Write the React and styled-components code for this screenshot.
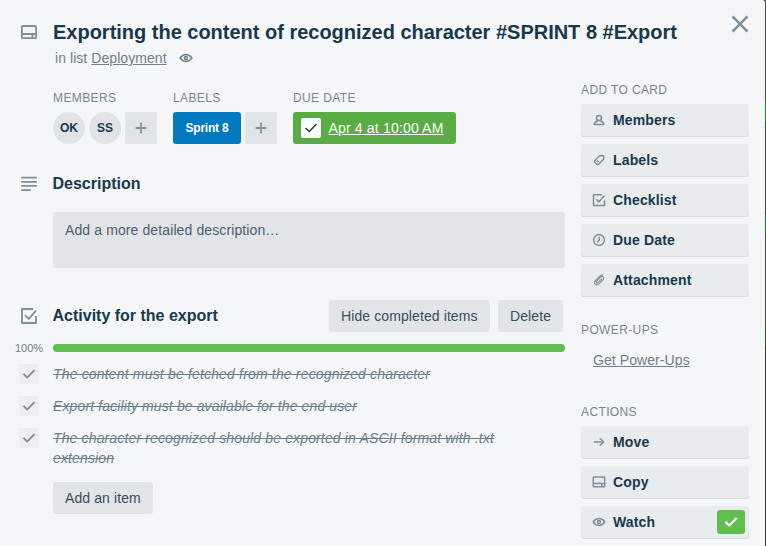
import React from "react";
import styled, { createGlobalStyle } from "styled-components";

const GlobalStyle = createGlobalStyle`
  *, *::before, *::after { box-sizing: border-box; }
  body {
    margin: 0;
    overflow: hidden;
    background: #4b4b4a;
    color: #17394d;
    font: 14px/20px "Liberation Sans", Arial, sans-serif;
  }
  h2, h3, p { margin: 0; }
  button { font: inherit; color: inherit; border: 0; padding: 0; text-align: left; }
`;

const Backdrop = styled.div`
  width: 766px;
  height: 546px;
  overflow: hidden;
  background: linear-gradient(#4b4b4a 0 100px, #168a16 100px 122px, #45423f 122px 215px, #178317 215px 235px, #4b4743 235px 330px, #176317 330px 346px, #3a3633 346px);
`;

const Dialog = styled.div`
  display: flex;
  gap: 16px;
  width: 765px;
  height: 546px;
  padding-right: 16px;
  background: #f4f6f8;
  border-radius: 0 3px 0 0;
`;

const Main = styled.main`
  width: 565px;
  padding: 18px 0 0 53px;
`;

const Sidebar = styled.aside`
  width: 168px;
  padding-top: 14px;
`;

const Row = styled.div`
  display: flex;
  align-items: center;
  height: ${(p) => p.$h}px;
  margin-top: ${(p) => p.$mt || 0}px;
`;

const Gutter = styled.span`
  display: flex;
  flex: none;
  width: 38px;
  margin-left: -38px;
  padding-left: 4.6px;
  color: #7d8f99;
`;

const Title = styled.h2`
  font-size: 20px;
  line-height: 28px;
  letter-spacing: -0.01px;
  white-space: nowrap;
`;

const SectionTitle = styled.h3`
  flex: 1;
  margin-left: -0.5px;
  font-size: 16px;
  line-height: 20px;
  white-space: nowrap;
`;

const ListLine = styled.p`
  display: flex;
  align-items: center;
  height: 20px;
  margin: 2px 0 0 2px;
  color: #6f808a;
  letter-spacing: 0.06px;
  white-space: pre;
  svg { margin-left: 10.5px; }
`;

const Link = styled.a`
  color: inherit;
  text-decoration: underline;
`;

const Details = styled.div`
  display: flex;
  margin-top: 20px;
  gap: 16px;
`;

const Heading = styled.h3`
  height: 20px;
  margin-top: ${(p) => p.$mt || 0}px;
  margin-bottom: 4px;
  color: #77868f;
  font-size: 12px;
  line-height: 20px;
  font-weight: 400;
  letter-spacing: 0.38px;
  text-transform: uppercase;
  white-space: nowrap;
`;

const Chips = styled.div`
  display: flex;
  gap: 4px;
`;

const Avatar = styled.span`
  width: 32px;
  height: 32px;
  border-radius: 50%;
  background: #e0e4e7;
  font-size: 12px;
  font-weight: 700;
  line-height: 32px;
  text-align: center;
`;

const AddBox = styled.button`
  display: flex;
  align-items: center;
  justify-content: center;
  width: 32px;
  height: 32px;
  padding-right: 1px;
  background: #e2e5e8;
  border-radius: 2px;
  color: #7d8f99;
`;

const Label = styled.span`
  width: 68px;
  height: 32px;
  background: #0079bf;
  border-radius: 3px;
  color: #fff;
  font-size: 12px;
  font-weight: 700;
  line-height: 32px;
  letter-spacing: -0.2px;
  text-align: center;
`;

const DueDate = styled.div`
  display: flex;
  align-items: center;
  gap: 7.5px;
  width: 163px;
  height: 32px;
  padding-left: 8px;
  border-radius: 3px;
  background: #5aac44;
  color: #fff;
  letter-spacing: 0.17px;
  white-space: nowrap;
`;

const CheckBox = styled.span`
  display: flex;
  align-items: center;
  justify-content: center;
  flex: none;
  width: 20px;
  height: 20px;
  padding-right: 1px;
  border-radius: 2px;
  background: ${(p) => (p.$muted ? "#eceeef" : "#fff")};
  color: ${(p) => (p.$muted ? "#84929a" : "#1f3a4b")};
`;

const DescriptionBox = styled.div`
  height: 56px;
  margin-top: 18px;
  padding: 8px 12px;
  border-radius: 3px;
  background: #e2e5e8;
  color: #4b606e;
  letter-spacing: 0.11px;
`;

const Button = styled.button`
  height: 32px;
  width: ${(p) => p.$w}px;
  margin-right: ${(p) => p.$mr || 0}px;
  margin-top: ${(p) => p.$mt || 0}px;
  padding-left: 12px;
  border-radius: 3px;
  background: #e2e5e8;
  color: #354d5c;
  letter-spacing: 0.1px;
  white-space: nowrap;
`;

const Percent = styled.span`
  width: 38px;
  margin-left: -38px;
  color: #6f7d86;
  font-size: 11px;
`;

const Track = styled.div`
  flex: 1;
  height: 8px;
  border-radius: 4px;
  background: #61bd4f;
`;

const Item = styled.div`
  display: flex;
  margin-left: -34px;
  margin-top: 12px;
  gap: 14px;
`;

const ItemText = styled.p`
  width: 470px;
  color: #6b808c;
  font-style: italic;
  text-decoration: line-through;
  letter-spacing: ${(p) => p.$ls || 0}px;
`;

const CloseLine = styled.div`
  display: flex;
  justify-content: flex-end;
  height: 66px;
  margin-right: -1px;
  color: #7d8f99;
`;

const ActionList = styled.div`
  display: flex;
  flex-direction: column;
  gap: 8px;
`;

const Action = styled.button`
  display: flex;
  align-items: center;
  gap: 5.5px;
  height: 32px;
  padding: 0 4px 0 8.5px;
  border-radius: 3px;
  background: #e9ecee;
  box-shadow: 0 1px 0 #d5dade;
  font-weight: 700;
  letter-spacing: 0.15px;
  svg { color: #7d8f99; }
`;

const Watching = styled.span`
  display: flex;
  align-items: center;
  justify-content: center;
  width: 28px;
  height: 24px;
  margin-left: auto;
  border-radius: 3px;
  background: #61bd4f;
  && svg { color: #fff; }
`;

const PowerUps = styled.p`
  height: 32px;
  margin-top: 4px;
  padding-left: 12px;
  color: #6f808a;
  line-height: 32px;
  letter-spacing: 0.08px;
`;

const shapes = {
  card: (
    <>
      <rect x="1.9" y="3" width="14.2" height="12.2" rx="1" />
      <path d="M2 11h14M12.4 11v4" />
    </>
  ),
  copy: (
    <>
      <rect x="3.3" y="3.9" width="11.4" height="9.8" rx="0.5" />
      <path d="M3.3 10.6h11.4M11.7 10.8v2.8" />
    </>
  ),
  lines: <path d="M1.2 2.7h15.6M1.2 6.8h15.6M1.2 10.9h15.6M1.2 15.1h9.6" />,
  checklist: (
    <>
      <path d="M13 2H2v14h14V9" />
      <path d="M5 8.2l3.7 3.6L16.2 3.5" />
    </>
  ),
  eye: (
    <>
      <path d="M3.1 9C4.8 6.7 6.8 5.6 9 5.6s4.2 1.1 5.9 3.4c-1.7 2.3-3.7 3.4-5.9 3.4S4.8 11.3 3.1 9z" />
      <circle cx="9" cy="9" r="1.5" />
    </>
  ),
  plus: <path d="M9 3.7v10.6M3.7 9h10.6" />,
  check: <path d="M3.4 8.9l3.8 3.6L14.6 5" />,
  close: <path d="M2.2 2.2l13.6 13.6M15.8 2.2L2.2 15.8" />,
  member: (
    <>
      <circle cx="9" cy="6.9" r="2.5" />
      <path d="M7 9.2v1.2c-1.8.3-2.8 1.1-2.8 3.2h9.6c0-2.1-1-2.9-2.8-3.2V9.2" />
    </>
  ),
  label: (
    <>
      <path d="M9.6 4.7l3-.2c.6 0 1 .3 1.1.9l.1 2.5-5.2 5.4c-.6.6-1.2.6-1.8 0l-2-2c-.6-.6-.6-1.2 0-1.8z" />
      <circle cx="7.7" cy="10.3" r="0.8" strokeWidth="1" />
    </>
  ),
  list: (
    <>
      <path d="M11.8 3.7H3.5v10.7h11V9.3" />
      <path d="M6.2 8.3l2.6 2.6 5.6-6.2" />
    </>
  ),
  clock: (
    <>
      <circle cx="9" cy="9" r="5.4" />
      <path d="M9.2 5.7v3.7l-2.1 1.7" />
    </>
  ),
  clip: (
    <path d="M12 7.6l-4.1 4.1c-1.1 1.1-2.5-.3-1.4-1.4l4.1-4.1c1.9-1.9 4.4.5 2.5 2.4l-4.2 4.2c-2.7 2.7-6-.6-3.4-3.3l4.3-4.4c1-.9 2.2-1.3 3.3-.8" />
  ),
  arrow: <path d="M4 9h9.6M9.8 5.2L13.6 9l-3.8 3.8" />,
};

const Glyph = styled.svg`
  flex: none;
  fill: none;
  stroke: currentColor;
  stroke-linejoin: round;
`;

const Icon = ({ name, size = 18, weight = 1.5 }) => (
  <Glyph width={size} height={size} viewBox="0 0 18 18" strokeWidth={weight} aria-hidden="true">
    {shapes[name]}
  </Glyph>
);

const addActions = [
  { icon: "member", text: "Members" },
  { icon: "label", text: "Labels" },
  { icon: "list", text: "Checklist" },
  { icon: "clock", text: "Due Date" },
  { icon: "clip", text: "Attachment", weight: 1.1 },
];

const cardActions = [
  { icon: "arrow", text: "Move", weight: 1.6 },
  { icon: "copy", text: "Copy" },
  { icon: "eye", text: "Watch", active: true },
];

const items = [
  { text: "The content must be fetched from the recognized character", ls: 0.17 },
  { text: "Export facility must be available for the end user", ls: 0.12 },
  { text: "The character recognized should be exported in ASCII format with .txt extension", ls: 0.14 },
];

const Actions = ({ actions }) => (
  <ActionList>
    {actions.map((a) => (
      <Action key={a.text}>
        <Icon name={a.icon} weight={a.weight} />
        {a.text}
        {a.active && (
          <Watching>
            <Icon name="check" weight={2.2} />
          </Watching>
        )}
      </Action>
    ))}
  </ActionList>
);

export default function App() {
  return (
    <>
      <GlobalStyle />
      <Backdrop>
        <Dialog>
          <Main>
            <Row $h={28}>
              <Gutter><Icon name="card" weight={1.8} /></Gutter>
              <Title>Exporting the content of recognized character #SPRINT 8 #Export</Title>
            </Row>
            <ListLine>
              in list <Link>Deployment</Link>
              <Icon name="eye" />
            </ListLine>
            <Details>
              <div>
                <Heading>Members</Heading>
                <Chips>
                  <Avatar>OK</Avatar>
                  <Avatar>SS</Avatar>
                  <AddBox aria-label="Add member"><Icon name="plus" weight={1.8} /></AddBox>
                </Chips>
              </div>
              <div>
                <Heading>Labels</Heading>
                <Chips>
                  <Label>Sprint 8</Label>
                  <AddBox aria-label="Add label"><Icon name="plus" weight={1.8} /></AddBox>
                </Chips>
              </div>
              <div>
                <Heading>Due date</Heading>
                <DueDate>
                  <CheckBox><Icon name="check" weight={1.4} /></CheckBox>
                  <Link>Apr 4 at 10:00 AM</Link>
                </DueDate>
              </div>
            </Details>
            <Row $h={20} $mt={30}>
              <Gutter><Icon name="lines" weight={1.8} /></Gutter>
              <SectionTitle>Description</SectionTitle>
            </Row>
            <DescriptionBox>Add a more detailed description…</DescriptionBox>
            <Row $h={32} $mt={32}>
              <Gutter><Icon name="checklist" weight={1.8} /></Gutter>
              <SectionTitle>Activity for the export</SectionTitle>
              <Button $w={161} $mr={8}>Hide completed items</Button>
              <Button $w={65} $mr={2}>Delete</Button>
            </Row>
            <Row $h={8} $mt={12}>
              <Percent>100%</Percent>
              <Track />
            </Row>
            {items.map((item) => (
              <Item key={item.text}>
                <CheckBox $muted><Icon name="check" weight={1.8} /></CheckBox>
                <ItemText $ls={item.ls}>{item.text}</ItemText>
              </Item>
            ))}
            <Button $w={100} $mt={14}>Add an item</Button>
          </Main>
          <Sidebar>
            <CloseLine><Icon name="close" size={20} weight={2.3} /></CloseLine>
            <Heading>Add to card</Heading>
            <Actions actions={addActions} />
            <Heading $mt={24}>Power-Ups</Heading>
            <PowerUps><Link>Get Power-Ups</Link></PowerUps>
            <Heading $mt={26}>Actions</Heading>
            <Actions actions={cardActions} />
          </Sidebar>
        </Dialog>
      </Backdrop>
    </>
  );
}
